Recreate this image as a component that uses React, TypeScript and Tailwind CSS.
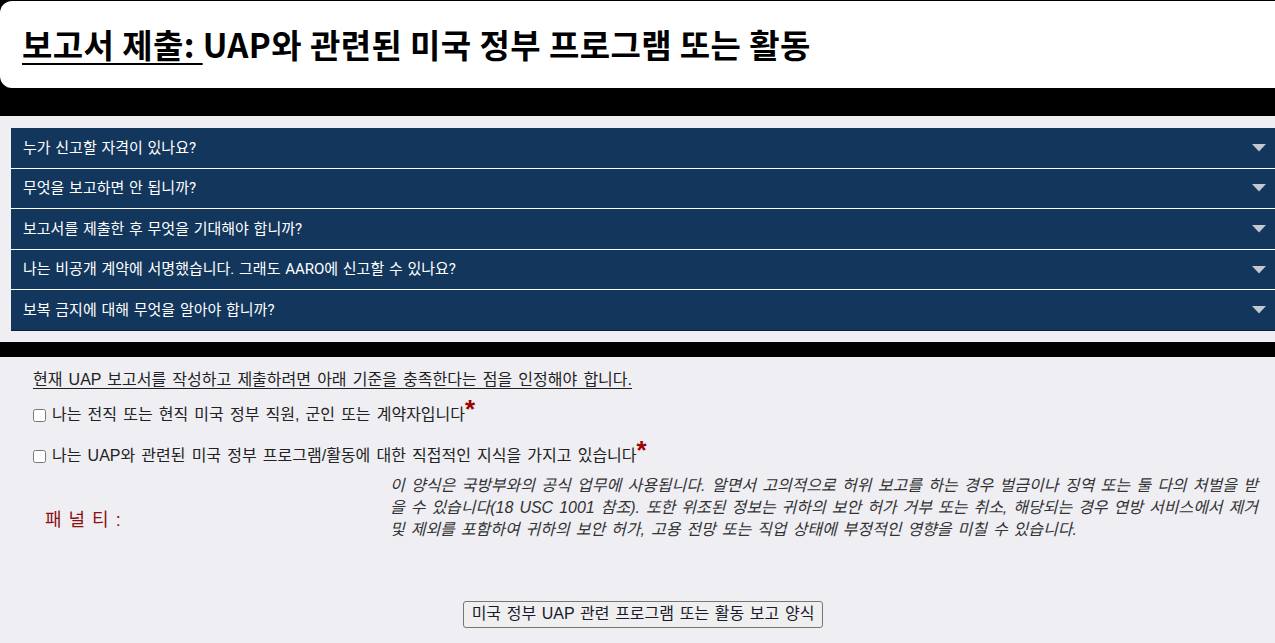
import { useState } from "react"

const questions = [
  "누가 신고할 자격이 있나요?",
  "무엇을 보고하면 안 됩니까?",
  "보고서를 제출한 후 무엇을 기대해야 합니까?",
  "나는 비공개 계약에 서명했습니다. 그래도 AARO에 신고할 수 있나요?",
  "보복 금지에 대해 무엇을 알아야 합니까?",
]

const kr = "font-['Liberation_Sans','Noto_Sans_CJK_KR',sans-serif]"

function Caret() {
  return (
    <svg width="14" height="8" viewBox="0 0 14 8" className="shrink-0">
      <polygon points="0,0 14,0 7,7.5" fill="#c3c8d0" />
    </svg>
  )
}

function Required() {
  return <span className="absolute text-[26px] font-bold text-[#a00000] leading-none -translate-y-[8px]">*</span>
}

export default function App() {
  const [checks, setChecks] = useState([false, false])

  const toggle = (i: number) => setChecks((c) => c.map((v, j) => (j === i ? !v : v)))

  return (
    <div className={`min-h-screen bg-[#eeeef3] ${kr}`}>
      {/* header */}
      <div className="bg-black pt-px pb-[28px]">
        <div className="bg-white rounded-[12px] h-[87px] flex items-center pl-[22px] -mr-[20px]">
          <h1 className="text-[33px] font-bold text-black leading-none font-['Noto_Sans_CJK_KR',sans-serif] tracking-[0.4px]">
            <span className="underline decoration-2 underline-offset-[5px]">보고서 제출: </span>
            UAP와 관련된 미국 정부 프로그램 또는 활동
          </h1>
        </div>
      </div>

      {/* faq */}
      <div className="pt-[12px] pb-[11px] pl-[11px]">
        {questions.map((q, i) => (
          <div
            key={i}
            className={`h-[40.6px] bg-[#13365c] flex items-center justify-between pl-[12px] pr-[9px] border-b ${
              i < questions.length - 1 ? "border-white" : "border-[#0a1f3a]"
            }`}
          >
            <span className="text-white text-[15px] [word-spacing:1px] font-['Roboto','Noto_Sans_CJK_KR',sans-serif]">
              {q}
            </span>
            <Caret />
          </div>
        ))}
      </div>

      <div className="bg-black h-[15px]" />

      {/* form */}
      <div className="pl-[33px] pt-[12px] text-[#222] text-[16px] leading-[22px] [word-spacing:1.7px]">
        <p className="underline underline-offset-[3px]">
          현재 UAP 보고서를 작성하고 제출하려면 아래 기준을 충족한다는 점을 인정해야 합니다.
        </p>

        <label className="flex items-center gap-[6px] mt-[13px] cursor-pointer">
          <input type="checkbox" checked={checks[0]} onChange={() => toggle(0)} className="w-[13px] h-[13px] m-0 mt-[2px]" />
          <span>
            나는 전직 또는 현직 미국 정부 직원, 군인 또는 계약자입니다
            <Required />
          </span>
        </label>

        <label className="flex items-center gap-[6px] mt-[19px] cursor-pointer">
          <input type="checkbox" checked={checks[1]} onChange={() => toggle(1)} className="w-[13px] h-[13px] m-0 mt-[2px]" />
          <span>
            나는 UAP와 관련된 미국 정부 프로그램/활동에 대한 직접적인 지식을 가지고 있습니다
            <Required />
          </span>
        </label>

        <div className="flex mt-[8px]">
          <div className="w-[357px] shrink-0 pl-[12px] pt-[34px]">
            <span className="text-[18px] text-[#8b1010] [word-spacing:2px]">패 널 티 :</span>
          </div>
          <p className="w-[868px] text-[16px] leading-[22px] italic text-[#333] text-justify [word-spacing:1.5px]">
            이 양식은 국방부와의 공식 업무에 사용됩니다. 알면서 고의적으로 허위 보고를 하는 경우 벌금이나 징역 또는 둘 다의 처벌을 받을 수 있습니다(18 USC 1001 참조). 또한 위조된 정보는 귀하의 보안 허가 거부 또는 취소, 해당되는 경우 연방 서비스에서 제거 및 제외를 포함하여 귀하의 보안 허가, 고용 전망 또는 직업 상태에 부정적인 영향을 미칠 수 있습니다.
          </p>
        </div>
      </div>

      <div className="flex justify-center pl-[11px] mt-[60px] pb-[15px]">
        <button className="h-[27px] px-[8px] bg-[#efefef] border border-[#767676] rounded-[3px] text-[16px] [word-spacing:1.2px] text-[#1a1a2e]">
          미국 정부 UAP 관련 프로그램 또는 활동 보고 양식
        </button>
      </div>
    </div>
  )
}
